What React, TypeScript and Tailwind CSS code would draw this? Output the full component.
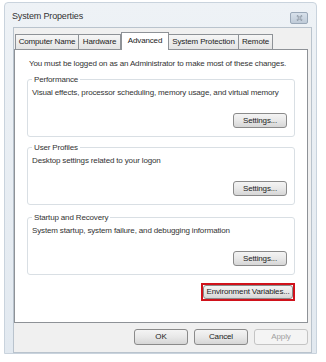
import React from "react";

const font = { fontFamily: '"Liberation Sans", Arial, sans-serif' };

function Btn({
  label,
  className = "",
  disabled = false,
}: {
  label: string;
  className?: string;
  disabled?: boolean;
}) {
  return (
    <div
      className={
        "flex items-center justify-center rounded-[3px] border text-[8px] leading-none " +
        (disabled
          ? "border-[#c4c4c4] bg-[#f4f4f4] text-[#a0a0a0] "
          : "border-[#8a8a8a] bg-gradient-to-b from-[#f4f4f4] via-[#e8e8e8] to-[#d6d6d6] text-[#222] ") +
        className
      }
    >
      {label}
    </div>
  );
}

function Group({
  title,
  text,
  className = "",
}: {
  title: string;
  text: string;
  className?: string;
}) {
  return (
    <div
      className={
        "relative mx-[12px] rounded-[3px] border border-[#d9dfe4] pl-[4px] pr-[7px] " + className
      }
    >
      <div className="absolute -top-[6px] left-[4px] bg-white px-[2px] text-[8px] leading-[11px] text-[#333]">
        {title}
      </div>
      <div className="whitespace-nowrap pt-[7px] text-[8px] leading-[11px] text-[#333]">{text}</div>
      <div className="flex justify-end pt-[15px] pb-[8px]">
        <Btn label="Settings..." className="h-[15px] w-[54px]" />
      </div>
    </div>
  );
}

const tabs = [
  { label: "Computer Name", w: "w-[64px]" },
  { label: "Hardware", w: "w-[43px]" },
  { label: "Advanced", w: "w-[48px]", active: true },
  { label: "System Protection", w: "w-[71px]" },
  { label: "Remote", w: "w-[35px]" },
];

export default function App() {
  return (
    <div className="h-[362px] w-[326px] bg-white pl-[4px] pt-[2px] tracking-[-0.15px]" style={font}>
      {/* window frame */}
      <div className="flex h-[352px] w-[313px] flex-col rounded-t-[4px] border border-[#c9d3dd] bg-gradient-to-b from-[#eef2f6] to-[#e2e9f0]">
        {/* title bar */}
        <div className="flex h-[24px] items-center justify-between pl-[7px] pr-[8px]">
          <span className="mt-[3px] text-[9px] text-[#333]">System Properties</span>
          <div className="mt-[5px] flex h-[12px] w-[18px] items-center justify-center rounded-[2px] border border-[#9aa8b8] bg-gradient-to-b from-[#d8e1eb] to-[#bfcbd8]">
            <svg width="7" height="6" viewBox="0 0 7 6">
              <path d="M1 0.5 L6 5.5 M6 0.5 L1 5.5" stroke="#7a8797" strokeWidth="1.6" />
              <path d="M1 0.5 L6 5.5 M6 0.5 L1 5.5" stroke="#f4f6f8" strokeWidth="0.6" />
            </svg>
          </div>
        </div>

        {/* client area */}
        <div className="ml-[8px] mr-[4px] flex flex-1 flex-col border border-[#b9c3cd] bg-[#f0f0f0] pb-[4px] pt-[4px]">
          {/* tabs */}
          <div className="flex h-[17px] items-end pl-[1px]">
            {tabs.map((t) => (
              <div
                key={t.label}
                className={
                  "flex items-center justify-center border border-b-0 text-[8px] leading-none text-[#222] " +
                  t.w +
                  (t.active
                    ? " relative z-10 -mb-[1px] h-[18px] border-[#8e9297] bg-white pb-[2px]"
                    : " -ml-px h-[15px] border-[#8e9297] bg-gradient-to-b from-[#f6f6f6] to-[#e4e4e4] first:ml-0")
                }
              >
                {t.label}
              </div>
            ))}
          </div>

          {/* tab panel */}
          <div className="mr-[3px] flex h-[274px] flex-col border border-[#8e9297] bg-white">
            <div className="pl-[14px] pt-[8px] text-[8px] leading-[11px] text-[#333]">
              You must be logged on as an Administrator to make most of these changes.
            </div>
            <Group
              className="mt-[10px]"
              title="Performance"
              text="Visual effects, processor scheduling, memory usage, and virtual memory"
            />
            <Group className="mt-[10px]" title="User Profiles" text="Desktop settings related to your logon" />
            <Group
              className="mt-[12px]"
              title="Startup and Recovery"
              text="System startup, system failure, and debugging information"
            />
            <div className="mr-[12px] mt-[8px] flex justify-end">
              <div className="border-2 border-[#d0121b]">
                <Btn label="Environment Variables..." className="h-[14px] w-[90px]" />
              </div>
            </div>
          </div>

          {/* dialog buttons */}
          <div className="mr-[3px] mt-[6px] flex justify-end gap-[6px]">
            <Btn label="OK" className="h-[16px] w-[54px]" />
            <Btn label="Cancel" className="h-[16px] w-[54px]" />
            <Btn label="Apply" className="h-[16px] w-[54px]" disabled />
          </div>
        </div>
      </div>
    </div>
  );
}
